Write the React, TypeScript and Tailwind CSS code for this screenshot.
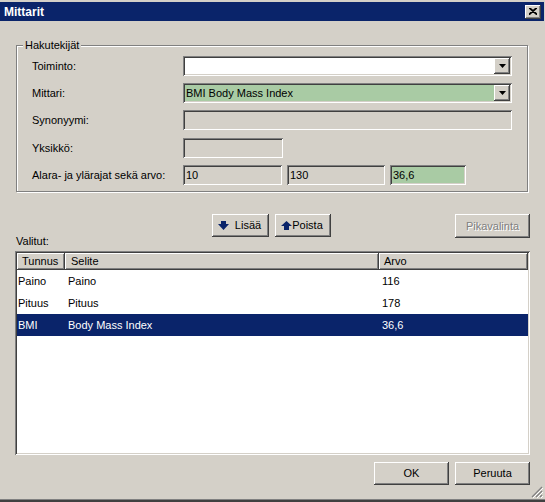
import React from 'react';

const raised =
  'shadow-[inset_-1px_-1px_#404040,inset_1px_1px_#ffffff,inset_-2px_-2px_#808080,inset_2px_2px_#d4d0c8]';
const sunken =
  'shadow-[inset_1px_1px_#808080,inset_-1px_-1px_#ffffff,inset_2px_2px_#404040,inset_-2px_-2px_#d4d0c8]';

function DropArrow() {
  return (
    <div className={`w-[16px] my-[2px] mr-[2px] bg-[#d4d0c8] flex items-center justify-center ${raised}`}>
      <svg width="7" height="4" viewBox="0 0 7 4">
        <polygon points="0,0 7,0 3.5,4" fill="#000" />
      </svg>
    </div>
  );
}

function Field({ w, bg, text, dropdown }: { w: string; bg: string; text?: string; dropdown?: boolean }) {
  return (
    <div className={`${w} ${bg} h-[20px] flex ${sunken}`}>
      <div className="flex-1 flex items-center pl-[3px] pt-[1px]">{text}</div>
      {dropdown && <DropArrow />}
    </div>
  );
}

function Row({ label, children }: { label: string; children: React.ReactNode }) {
  return (
    <div className="flex items-center h-[20px]">
      <div className="w-[166px] pl-[15px]">{label}</div>
      <div className="flex gap-[5px]">{children}</div>
    </div>
  );
}

function Btn({ w, h, children, className }: { w: string; h: string; children: React.ReactNode; className?: string }) {
  return (
    <div className={`${w} ${h} bg-[#d4d0c8] flex items-center justify-center ${raised} ${className ?? ''}`}>
      {children}
    </div>
  );
}

const rows = [
  { id: 'Paino', desc: 'Paino', val: '116' },
  { id: 'Pituus', desc: 'Pituus', val: '178' },
  { id: 'BMI', desc: 'Body Mass Index', val: '36,6', sel: true },
];

const headCell = 'flex items-center shadow-[inset_-1px_-1px_#404040,inset_1px_1px_#ffffff,inset_-2px_-2px_#808080]';

export default function App() {
  return (
    <div className="w-[545px] h-[502px] bg-[#d4d0c8] flex flex-col relative overflow-hidden text-[11px] text-black font-['Liberation_Sans',Arial,sans-serif] leading-none">
      {/* title bar */}
      <div className="mt-[2px] mr-[1px] h-[19px] bg-[#0a246a] flex items-center justify-between">
        <span className="pl-[4px] text-white font-bold text-[12px]">Mittarit</span>
        <div className={`w-[16px] h-[14px] mr-[3px] bg-[#d4d0c8] flex items-center justify-center ${raised}`}>
          <svg width="8" height="7" viewBox="0 0 8 7">
            <path d="M0 0 L8 7 M8 0 L0 7 M1 0 L8 6 M7 0 L0 6" stroke="#000" strokeWidth="1.2" />
          </svg>
        </div>
      </div>

      {/* Hakutekijät group */}
      <div className="relative ml-[16px] mt-[24px] w-[512px] h-[147px] border border-[#808080] shadow-[inset_1px_1px_#ffffff,1px_1px_#ffffff] pt-[10px] flex flex-col gap-[7px]">
        <span className="absolute -top-[6px] left-[6px] px-[2px] bg-[#d4d0c8]">Hakutekijät</span>
        <Row label="Toiminto:">
          <Field w="w-[329px]" bg="bg-white" dropdown />
        </Row>
        <Row label="Mittari:">
          <Field w="w-[329px]" bg="bg-[#a9cba4]" text="BMI Body Mass Index" dropdown />
        </Row>
        <Row label="Synonyymi:">
          <Field w="w-[329px]" bg="bg-[#d4d0c8]" />
        </Row>
        <div className="mt-[1px]">
          <Row label="Yksikkö:">
            <Field w="w-[100px]" bg="bg-[#d4d0c8]" />
          </Row>
        </div>
        <Row label="Alara- ja ylärajat sekä arvo:">
          <Field w="w-[99px]" bg="bg-[#d4d0c8]" text="10" />
          <Field w="w-[98px]" bg="bg-[#d4d0c8]" text="130" />
          <Field w="w-[76px]" bg="bg-[#a9cba4]" text="36,6" />
        </Row>
      </div>

      {/* buttons + Valitut */}
      <div className="mt-[22px] h-[37px] flex items-start">
        <div className="w-[212px] self-end pl-[16px] pb-[4px]">Valitut:</div>
        <Btn w="w-[57px]" h="h-[23px]" className="gap-[6px] pr-[2px]">
          <svg width="11" height="9" viewBox="0 0 11 9">
            <polygon points="3,0 8,0 8,3 11,3 5.5,9 0,3 3,3" fill="#0a246a" />
          </svg>
          <span>Lisää</span>
        </Btn>
        <Btn w="w-[56px]" h="h-[23px]" className="ml-[6px] pr-[2px]">
          <svg width="11" height="9" viewBox="0 0 11 9">
            <polygon points="5.5,0 11,5 8,5 8,9 3,9 3,5 0,5" fill="#0a246a" />
          </svg>
          <span>Poista</span>
        </Btn>
        <Btn w="w-[75px]" h="h-[24px]" className="ml-[124px]">
          <span className="text-[#808080] [text-shadow:1px_1px_#ffffff]">Pikavalinta</span>
        </Btn>
      </div>

      {/* table */}
      <div className={`ml-[15px] w-[515px] h-[204px] bg-white p-[2px] ${sunken}`}>
        <div className="flex h-[17px] bg-[#d4d0c8]">
          <div className={`w-[48px] pl-[5px] ${headCell}`}>Tunnus</div>
          <div className={`w-[314px] pl-[6px] ${headCell}`}>Selite</div>
          <div className={`flex-1 pl-[5px] ${headCell}`}>Arvo</div>
        </div>
        {rows.map((r) => (
          <div key={r.id} className={`flex h-[22px] items-center ${r.sel ? 'bg-[#0a246a] text-white' : ''}`}>
            <div className="w-[48px] pl-[1px]">{r.id}</div>
            <div className="w-[314px] pl-[3px]">{r.desc}</div>
            <div className="flex-1 pl-[3px]">{r.val}</div>
          </div>
        ))}
      </div>

      {/* OK / Peruuta */}
      <div className="mt-[7px] flex pl-[374px] gap-[6px]">
        <Btn w="w-[75px]" h="h-[23px]">OK</Btn>
        <Btn w="w-[75px]" h="h-[23px]">Peruuta</Btn>
      </div>

      <div className="flex-1" />
      <div className="h-[1px] bg-[#808080]" />
      <div className="h-[2px] bg-[#404040]" />

      {/* size grip */}
      <svg className="absolute right-[2px] bottom-[4px]" width="12" height="12" viewBox="0 0 12 12">
        <path d="M11 1 L1 11 M11 5 L5 11 M11 9 L9 11" stroke="#808080" strokeWidth="1.2" />
        <path d="M12 2 L2 12 M12 6 L6 12 M12 10 L10 12" stroke="#ffffff" strokeWidth="1" />
      </svg>
    </div>
  );
}
